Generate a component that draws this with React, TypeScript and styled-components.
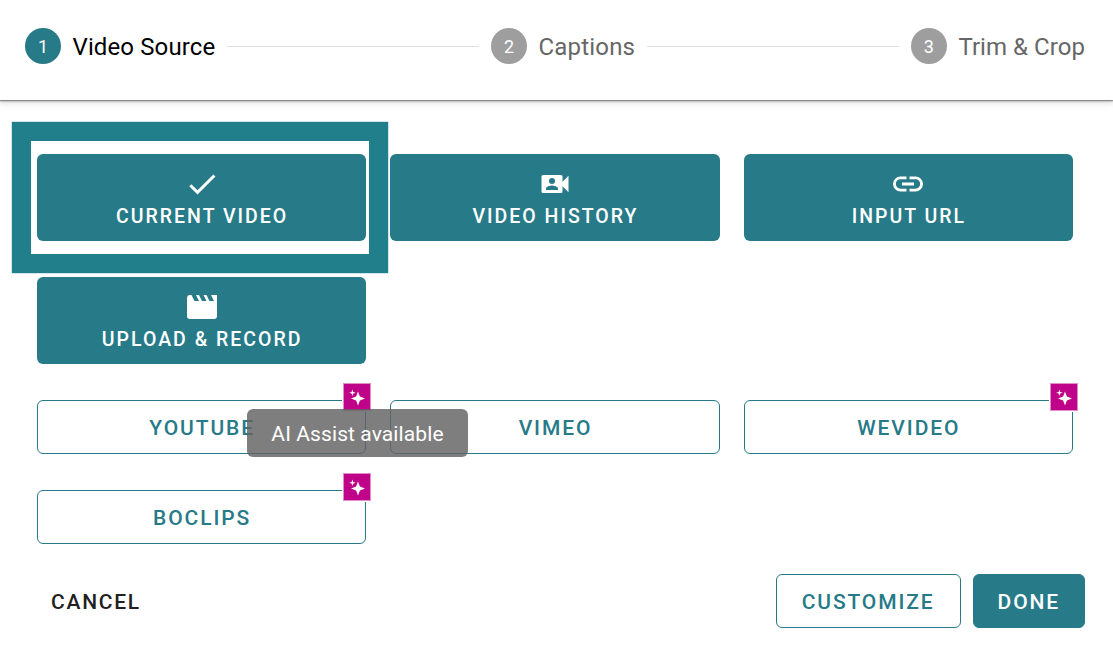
import React from "react";
import styled, { createGlobalStyle } from "styled-components";

const teal = "#277a88";
const magenta = "#bf0489";

const GlobalStyle = createGlobalStyle`
  *, *::before, *::after { box-sizing: border-box; }
  body {
    margin: 0;
    background: #fff;
    font-family: Roboto, "Liberation Sans", sans-serif;
    overflow: hidden;
  }
  button { font-family: inherit; margin: 0; cursor: pointer; }
`;

const Page = styled.div`
  width: 1113px;
  height: 657px;
  display: flex;
  flex-direction: column;
  background: #fff;
`;

const StepperHeader = styled.header`
  height: 100px;
  flex: none;
  display: flex;
  align-items: flex-start;
  padding: 28px 28px 0 25px;
  background: #fff;
  box-shadow: 0 1px 1px rgba(0, 0, 0, 0.32), 0 2px 2px rgba(0, 0, 0, 0.14),
    0 2px 7px 1px rgba(0, 0, 0, 0.12);
`;

const Step = styled.div<{ $active?: boolean }>`
  display: flex;
  align-items: center;
  gap: 11.5px;
  height: 36px;
  font-size: 24px;
  line-height: 36px;
  white-space: nowrap;
  color: ${(p) => (p.$active ? "#000" : "#666")};
`;

const StepNumber = styled.span<{ $active?: boolean }>`
  display: flex;
  align-items: center;
  justify-content: center;
  width: 36px;
  height: 36px;
  padding-top: 1px;
  border-radius: 50%;
  font-size: 18px;
  color: #fff;
  background: ${(p) => (p.$active ? teal : "#9e9e9e")};
`;

const StepLabel = styled.span<{ $spacing: number }>`
  letter-spacing: ${(p) => p.$spacing}px;
  padding-top: 2px;
`;

const Divider = styled.hr`
  flex: 1;
  height: 1px;
  margin: 18px 12px 0;
  border: 0;
  background: #dedede;
`;

const Content = styled.main`
  display: flex;
  flex-direction: column;
  gap: 36px;
  padding: 54px 40px 0 37px;
`;

const Grid = styled.div<{ $row: number }>`
  display: grid;
  grid-template-columns: repeat(3, 1fr);
  grid-auto-rows: ${(p) => p.$row}px;
  gap: 36px 24px;
`;

const Cell = styled.div`
  position: relative;
  display: flex;
`;

const SourceTile = styled.button`
  flex: 1;
  display: flex;
  flex-direction: column;
  align-items: center;
  padding: 12px 0 0;
  border: 0;
  border-radius: 6px;
  background: ${teal};
  color: #fff;
  font-size: 19.5px;
  font-weight: 500;
  line-height: 30px;
  letter-spacing: 2px;
`;

const TileLabel = styled.span`
  padding-left: 1px;
`;

const HighlightFrame = styled.div`
  position: absolute;
  top: -32.5px;
  left: -24.7px;
  width: 376px;
  height: 151.3px;
  border: 19px solid #217f8c;
  box-shadow: 0 0 0 0.5px #a5cdd2;
  pointer-events: none;
`;

const ProviderButton = styled.button`
  flex: 1;
  border: 1px solid ${teal};
  border-radius: 6px;
  background: transparent;
  color: ${teal};
  padding: 2px 0 0 1px;
  font-size: 21px;
  font-weight: 500;
  letter-spacing: 1.9px;
`;

const AssistBadge = styled.span`
  position: absolute;
  top: -18px;
  right: -6px;
  width: 30px;
  height: 30px;
  border: 1px solid #fff;
  background: #e08fc6;
  padding: 1px;
  display: flex;
`;

const Tooltip = styled.div`
  position: absolute;
  z-index: 2;
  top: 9px;
  left: 210px;
  width: 221px;
  height: 48px;
  padding-top: 1px;
  border-radius: 6px;
  background: rgba(97, 97, 97, 0.82);
  color: #fff;
  font-size: 21px;
  line-height: 48px;
  letter-spacing: 0.1px;
  text-align: center;
  white-space: nowrap;
`;

const Footer = styled.footer`
  display: flex;
  align-items: center;
  gap: 12px;
  padding: 30px 28px 0 25px;
`;

const ActionButton = styled.button<{ $kind: "text" | "outlined" | "filled" }>`
  height: 54px;
  padding: 2px ${(p) => (p.$kind === "filled" ? 24 : 25)}px 0;
  border: 1px solid ${(p) => (p.$kind === "text" ? "transparent" : teal)};
  border-radius: 6px;
  background: ${(p) => (p.$kind === "filled" ? teal : "transparent")};
  color: ${(p) =>
    p.$kind === "filled" ? "#fff" : p.$kind === "outlined" ? teal : "#212121"};
  font-size: 21px;
  font-weight: 500;
  letter-spacing: ${(p) => (p.$kind === "text" ? 1.75 : 1.875)}px;
  margin-right: ${(p) => (p.$kind === "text" ? "auto" : "0")};
`;

const icons = {
  check: "M21,7L9,19L3.5,13.5L4.91,12.09L9,16.17L19.59,5.59L21,7Z",
  videoAccount:
    "M17,10.5V7A1,1 0 0,0 16,6H4A1,1 0 0,0 3,7V17A1,1 0 0,0 4,18H16A1,1 0 0,0 17,17V13.5L21,17.5V6.5L17,10.5M14,16H6V15C6,13.67 8.67,13 10,13C11.33,13 14,13.67 14,15V16M10,8A2,2 0 0,1 12,10A2,2 0 0,1 10,12A2,2 0 0,1 8,10A2,2 0 0,1 10,8Z",
  link: "M3.9,12C3.9,10.29 5.29,8.9 7,8.9H11V7H7A5,5 0 0,0 2,12A5,5 0 0,0 7,17H11V15.1H7C5.29,15.1 3.9,13.71 3.9,12M8,13H16V11H8V13M17,7H13V8.9H17C18.71,8.9 20.1,10.29 20.1,12C20.1,13.71 18.71,15.1 17,15.1H13V17H17A5,5 0 0,0 22,12A5,5 0 0,0 17,7Z",
  movie:
    "M18,4L20,8H17L15,4H13L15,8H12L10,4H8L10,8H7L5,4H4A2,2 0 0,0 2,6V18A2,2 0 0,0 4,20H20A2,2 0 0,0 22,18V4H18Z",
};

const Icon = ({ path }: { path: string }) => (
  <svg width="36" height="36" viewBox="0 0 24 24" fill="currentColor">
    <path fillRule="evenodd" d={path} />
  </svg>
);

const Sparkles = () => (
  <AssistBadge>
    <svg width="26" height="26" viewBox="0 0 26 26">
      <rect width="26" height="26" fill={magenta} />
      <path
        fill="#fff"
        d="M14 7.6L15.9 12.6L21 14.5L15.9 16.4L14 21.6L12.1 16.4L7 14.5L12.1 12.6Z"
      />
      <path
        fill="#fff"
        d="M8.4 5.4L9.2 7.9L11.7 8.7L9.2 9.5L8.4 12L7.6 9.5L5.1 8.7L7.6 7.9Z"
      />
    </svg>
  </AssistBadge>
);

const sources = [
  { label: "CURRENT VIDEO", icon: icons.check, highlighted: true },
  { label: "VIDEO HISTORY", icon: icons.videoAccount },
  { label: "INPUT URL", icon: icons.link },
  { label: "UPLOAD & RECORD", icon: icons.movie },
];

const providers = [
  { label: "YOUTUBE", assist: true, tooltip: "AI Assist available" },
  { label: "VIMEO" },
  { label: "WEVIDEO", assist: true },
  { label: "BOCLIPS", assist: true },
];

export default function App() {
  return (
    <Page>
      <GlobalStyle />
      <StepperHeader>
        <Step $active>
          <StepNumber $active>1</StepNumber>
          <StepLabel $spacing={0.12}>Video Source</StepLabel>
        </Step>
        <Divider />
        <Step>
          <StepNumber>2</StepNumber>
          <StepLabel $spacing={0.18}>Captions</StepLabel>
        </Step>
        <Divider />
        <Step>
          <StepNumber>3</StepNumber>
          <StepLabel $spacing={0.06}>Trim &amp; Crop</StepLabel>
        </Step>
      </StepperHeader>
      <Content>
        <Grid $row={87}>
          {sources.map((s) => (
            <Cell key={s.label}>
              <SourceTile>
                <Icon path={s.icon} />
                <TileLabel>{s.label}</TileLabel>
              </SourceTile>
              {s.highlighted && <HighlightFrame />}
            </Cell>
          ))}
        </Grid>
        <Grid $row={54}>
          {providers.map((p) => (
            <Cell key={p.label}>
              <ProviderButton>{p.label}</ProviderButton>
              {p.assist && <Sparkles />}
              {p.tooltip && <Tooltip>{p.tooltip}</Tooltip>}
            </Cell>
          ))}
        </Grid>
      </Content>
      <Footer>
        <ActionButton $kind="text">CANCEL</ActionButton>
        <ActionButton $kind="outlined">CUSTOMIZE</ActionButton>
        <ActionButton $kind="filled">DONE</ActionButton>
      </Footer>
    </Page>
  );
}
